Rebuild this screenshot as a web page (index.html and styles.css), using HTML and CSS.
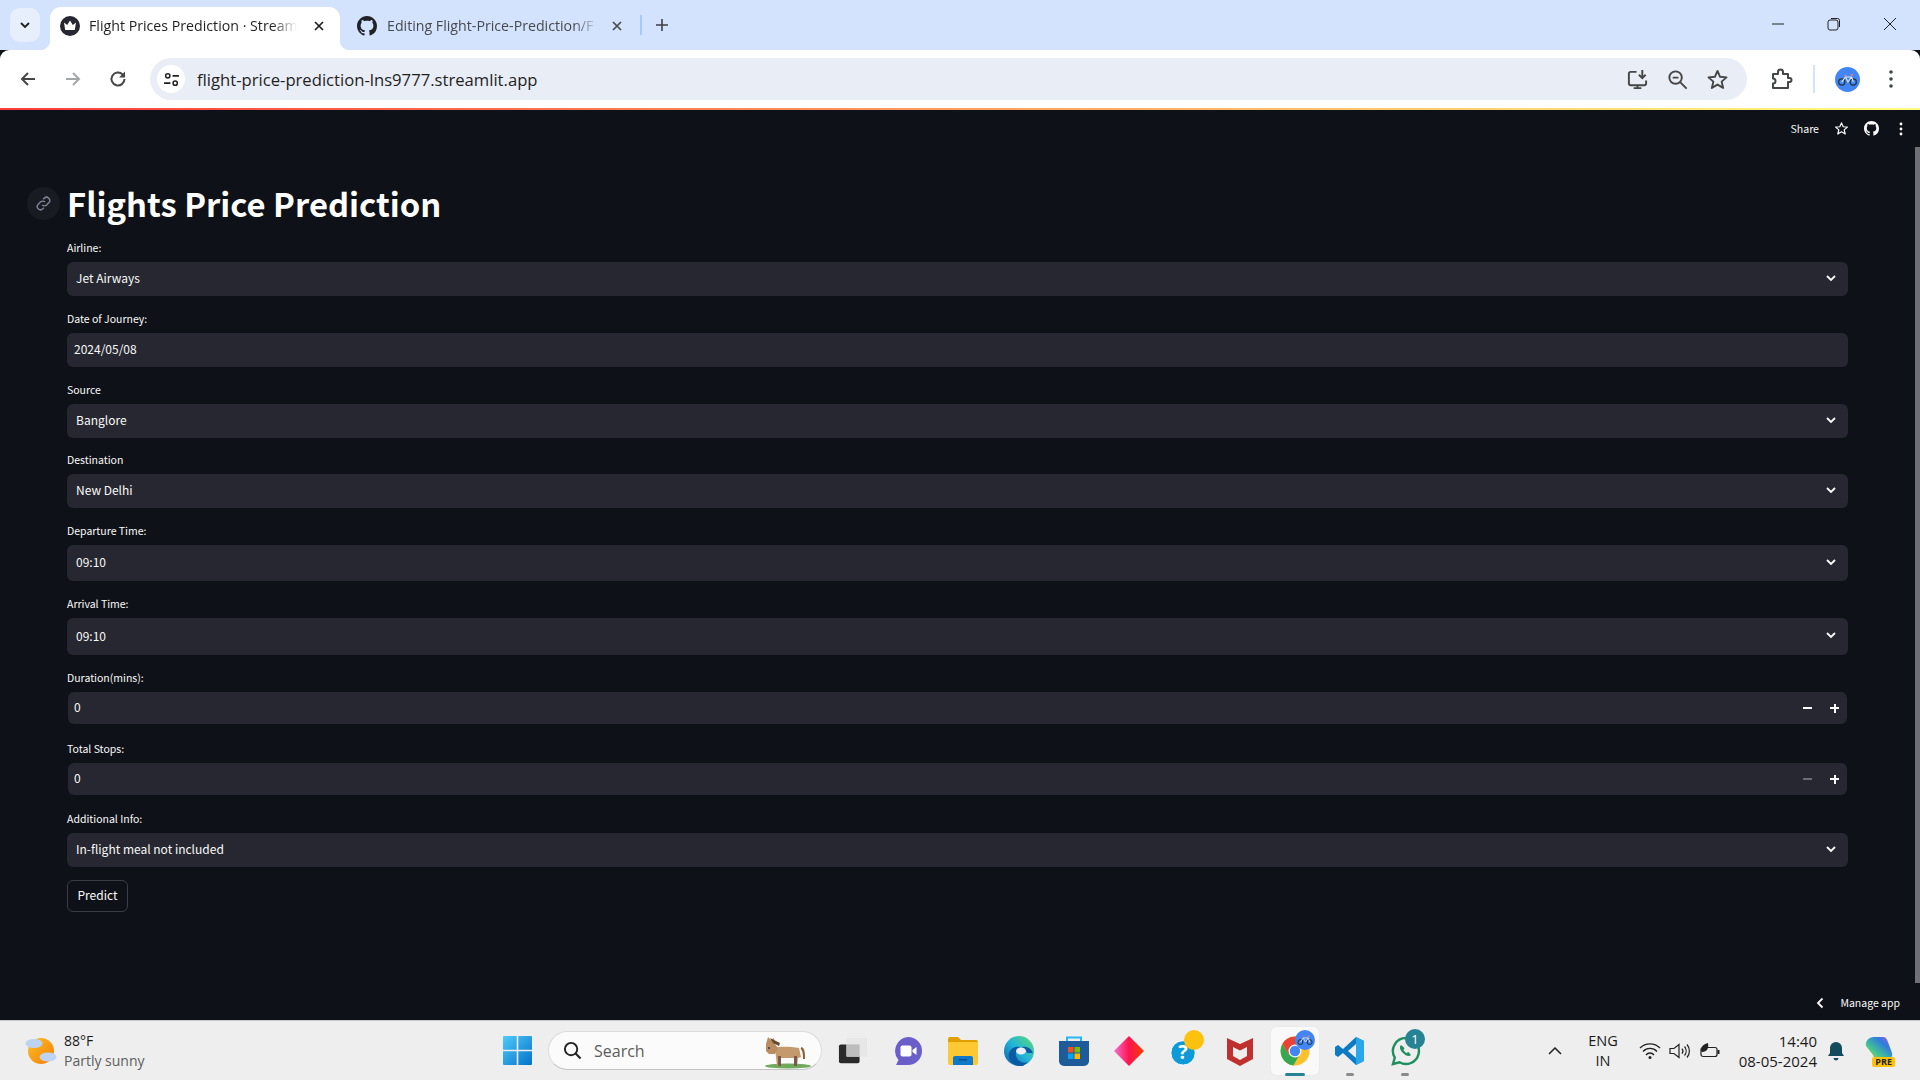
FILE: index.html
```html
<!DOCTYPE html>
<html lang="en">
<head>
    <meta charset="UTF-8">
    <title>Flight Prices Prediction · Streamlit</title>
    <link rel="stylesheet" href="styles.css">
</head>
<body>
    <svg class="defs" width="0" height="0">
        <symbol id="gh" viewBox="0 0 16 16"><path fill="currentColor" d="M8 0C3.58 0 0 3.58 0 8c0 3.54 2.29 6.53 5.47 7.59.4.07.55-.17.55-.38 0-.19-.01-.82-.01-1.49-2.01.37-2.53-.49-2.69-.94-.09-.23-.48-.94-.82-1.13-.28-.15-.68-.52-.01-.53.63-.01 1.08.58 1.23.82.72 1.21 1.87.87 2.33.66.07-.52.28-.87.51-1.07-1.78-.2-3.64-.89-3.64-3.95 0-.87.31-1.59.82-2.15-.08-.2-.36-1.02.08-2.12 0 0 .67-.21 2.2.82.64-.18 1.32-.27 2-.27.68 0 1.36.09 2 .27 1.53-1.04 2.2-.82 2.2-.82.44 1.1.16 1.92.08 2.12.51.56.82 1.27.82 2.15 0 3.07-1.87 3.75-3.65 3.95.29.25.54.73.54 1.48 0 1.07-.01 1.93-.01 2.2 0 .21.15.46.55.38A8.013 8.013 0 0016 8c0-4.42-3.58-8-8-8z"/></symbol>
        <symbol id="chev" viewBox="0 0 12 12"><path d="M2 4l4 4 4-4" fill="none" stroke="currentColor" stroke-width="1.8"/></symbol>
        <symbol id="close" viewBox="0 0 12 12"><path d="M2 2l8 8M10 2l-8 8" fill="none" stroke="currentColor" stroke-width="1.7"/></symbol>
        <symbol id="star" viewBox="0 0 24 24"><path d="M12 3l2.7 6.2 6.7.6-5.1 4.4 1.6 6.6L12 17.3l-5.9 3.5 1.6-6.6-5.1-4.4 6.7-.6z" fill="none" stroke="currentColor" stroke-width="2" stroke-linejoin="round"/></symbol>
        <symbol id="bike" viewBox="0 0 24 24"><circle cx="12" cy="12" r="12" fill="#4285f4"/><g fill="none"><circle cx="6.500" cy="14.500" r="3" stroke="#263238" stroke-width="1.200"/><circle cx="17.500" cy="14.500" r="3" stroke="#263238" stroke-width="1.200"/><path d="M6.500 14.500L10 9.500h6l1.500 5M10 9.500l2.500 5 3.500-5" stroke="#dce8ff" stroke-width="1"/><path d="M9 8.500h2.500M15 7.500h2.500" stroke="#f08a5d" stroke-width="1.200"/></g></symbol>
    </svg>

    <div class="tabbar">
        <div class="tab-switch"><svg class="ico-12"><use href="#chev"/></svg></div>
        <div class="tab tab-active">
            <svg class="tab-icon" viewBox="0 0 20 20"><circle cx="10" cy="10" r="10" fill="#262730"/><path d="M4 6.500l3.200 2.600L10 4.500l2.800 4.600L16 6.500 14.800 14H5.200z" fill="#fff"/></svg>
            <span class="tab-title">Flight Prices Prediction · Stream</span>
            <svg class="tab-close"><use href="#close"/></svg>
        </div>
        <div class="tab">
            <svg class="tab-icon tab-gh"><use href="#gh"/></svg>
            <span class="tab-title">Editing Flight-Price-Prediction/F</span>
            <svg class="tab-close"><use href="#close"/></svg>
        </div>
        <div class="tab-sep"></div>
        <svg class="tab-new" viewBox="0 0 14 14"><path d="M7 1v12M1 7h12" stroke="#3c4043" stroke-width="1.6"/></svg>
        <div class="win-controls">
            <svg viewBox="0 0 14 14"><path d="M1 7h12" stroke="#222" stroke-width="1"/></svg>
            <svg viewBox="0 0 14 14"><rect x="1" y="3" width="10" height="10" rx="2" fill="none" stroke="#222"/><path d="M4 1.500h6.500a2 2 0 012 2V10" fill="none" stroke="#222"/></svg>
            <svg viewBox="0 0 14 14"><path d="M1 1l12 12M13 1L1 13" stroke="#222" stroke-width="1"/></svg>
        </div>
    </div>

    <div class="toolbar">
        <svg class="nav-btn" viewBox="0 0 20 20"><path d="M17 10H4M10 4l-6 6 6 6" fill="none" stroke="#444746" stroke-width="2"/></svg>
        <svg class="nav-btn" viewBox="0 0 20 20"><path d="M3 10h13M10 4l6 6-6 6" fill="none" stroke="#a4a6a8" stroke-width="2"/></svg>
        <svg class="nav-btn" viewBox="0 0 20 20"><path d="M16.500 10a6.500 6.500 0 11-1.900-4.600L16.500 7.500" fill="none" stroke="#444746" stroke-width="2"/><path d="M17 2.500v6h-6z" fill="#444746"/></svg>
        <div class="omnibox">
            <div class="site-info">
                <svg viewBox="0 0 16 16"><circle cx="4.500" cy="4.500" r="2" fill="none" stroke="#1f1f1f" stroke-width="1.400"/><path d="M9 4.500h6M1 11.500h6" stroke="#1f1f1f" stroke-width="1.600"/><circle cx="11.500" cy="11.500" r="2" fill="none" stroke="#1f1f1f" stroke-width="1.400"/></svg>
            </div>
            <span class="url">flight-price-prediction-lns9777.streamlit.app</span>
            <div class="omni-actions">
                <svg viewBox="0 0 24 24"><path d="M11 4H5a2 2 0 00-2 2v10a2 2 0 002 2h14a2 2 0 002-2v-3M8 21h8M12 18v3" fill="none" stroke="#444746" stroke-width="2"/><path d="M17 2v8M13.500 7l3.500 3.500L20.500 7" fill="none" stroke="#444746" stroke-width="2"/></svg>
                <svg viewBox="0 0 24 24"><circle cx="10" cy="10" r="6.500" fill="none" stroke="#444746" stroke-width="2"/><path d="M7 10h6M15 15l6.500 6.500" stroke="#444746" stroke-width="2"/></svg>
                <svg class="omni-star"><use href="#star"/></svg>
            </div>
        </div>
        <svg class="puzzle" viewBox="0 0 24 24"><path d="M4 7h5V5a2.500 2.500 0 015 0v2h5v4h1.500a2 2 0 010 4H19v6H4v-4.500a2.500 2.500 0 000-5z" fill="none" stroke="#444746" stroke-width="2" stroke-linejoin="round"/></svg>
        <div class="tool-sep"></div>
        <svg class="avatar"><use href="#bike"/></svg>
        <svg class="menu-dots" viewBox="0 0 4 18"><circle cx="2" cy="2" r="1.800" fill="#444746"/><circle cx="2" cy="9" r="1.800" fill="#444746"/><circle cx="2" cy="16" r="1.800" fill="#444746"/></svg>
    </div>

    <div class="app">
        <div class="decoration"></div>
        <div class="scrollbar"></div>
        <div class="app-header">
            <span class="share">Share</span>
            <svg class="head-ico"><use href="#star"/></svg>
            <svg class="head-ico head-gh"><use href="#gh"/></svg>
            <svg class="head-dots" viewBox="0 0 4 14"><circle cx="2" cy="2" r="1.400" fill="#fafafa"/><circle cx="2" cy="7" r="1.400" fill="#fafafa"/><circle cx="2" cy="12" r="1.400" fill="#fafafa"/></svg>
        </div>
        <div class="content">
            <div class="title-row">
                <div class="anchor">
                    <svg viewBox="0 0 24 24"><path d="M10 14a4.500 4.500 0 006.400 0l3-3a4.500 4.500 0 00-6.400-6.400l-1.500 1.500M14 10a4.500 4.500 0 00-6.400 0l-3 3a4.500 4.500 0 006.400 6.400l1.500-1.500" fill="none" stroke="#808495" stroke-width="2"/></svg>
                </div>
                <h1>Flights Price Prediction</h1>
            </div>

            <div class="field">
                <label>Airline:</label>
                <div class="box select"><span>Jet Airways</span><svg class="chev"><use href="#chev"/></svg></div>
            </div>
            <div class="field">
                <label>Date of Journey:</label>
                <div class="box date"><span>2024/05/08</span></div>
            </div>
            <div class="field field-tight">
                <label>Source</label>
                <div class="box select"><span>Banglore</span><svg class="chev"><use href="#chev"/></svg></div>
            </div>
            <div class="field">
                <label>Destination</label>
                <div class="box select"><span>New Delhi</span><svg class="chev"><use href="#chev"/></svg></div>
            </div>
            <div class="field">
                <label>Departure Time:</label>
                <div class="box select box-36"><span>09:10</span><svg class="chev"><use href="#chev"/></svg></div>
            </div>
            <div class="field">
                <label>Arrival Time:</label>
                <div class="box select box-37"><span>09:10</span><svg class="chev"><use href="#chev"/></svg></div>
            </div>
            <div class="field field-wide">
                <label>Duration(mins):</label>
                <div class="box number">
                    <span>0</span>
                    <b class="step"><i class="minus"></i></b>
                    <b class="step"><i class="minus"></i><i class="plus-bar"></i></b>
                </div>
            </div>
            <div class="field field-mid">
                <label>Total Stops:</label>
                <div class="box number">
                    <span>0</span>
                    <b class="step step-off"><i class="minus"></i></b>
                    <b class="step"><i class="minus"></i><i class="plus-bar"></i></b>
                </div>
            </div>
            <div class="field field-last">
                <label>Additional Info:</label>
                <div class="box select"><span>In-flight meal not included</span><svg class="chev"><use href="#chev"/></svg></div>
            </div>
            <button class="predict">Predict</button>
        </div>
        <div class="manage">
            <svg viewBox="0 0 10 12"><path d="M7.500 1.500L3 6l4.500 4.500" fill="none" stroke="#fafafa" stroke-width="1.800"/></svg>
            <span>Manage app</span>
        </div>
    </div>

    <div class="taskbar">
        <div class="weather">
            <svg viewBox="0 0 32 30"><defs><linearGradient id="sun" x1="0" y1="0" x2="1" y2="1"><stop offset="0" stop-color="#fbc02d"/><stop offset="1" stop-color="#f57c00"/></linearGradient></defs><circle cx="16" cy="15" r="13" fill="url(#sun)"/><ellipse cx="9" cy="7.500" rx="8.500" ry="4.500" fill="#bcd3f2"/><ellipse cx="23" cy="21" rx="8.500" ry="4.500" fill="#bcd3f2"/></svg>
            <div class="weather-text">
                <div class="temp">88°F</div>
                <div class="sky">Partly sunny</div>
            </div>
        </div>
        <svg class="win-logo" viewBox="0 0 29 29"><defs><linearGradient id="wl" x1="0" y1="0" x2="1" y2="1"><stop offset="0" stop-color="#4fcbfb"/><stop offset="1" stop-color="#0571c9"/></linearGradient></defs><path fill="url(#wl)" d="M0 1a1 1 0 011-1h12.700v13.700H0zM15.300 0H28a1 1 0 011 1v12.700H15.300zM0 15.300h13.700V29H1a1 1 0 01-1-1zM15.300 15.300H29V28a1 1 0 01-1 1H15.300z"/></svg>
        <div class="search">
            <svg class="search-ico" viewBox="0 0 20 20"><circle cx="8.500" cy="8.500" r="6.500" fill="none" stroke="#222" stroke-width="2"/><path d="M13 13l5.500 5.500" stroke="#222" stroke-width="2.200"/></svg>
            <span>Search</span>
            <svg class="donkey" viewBox="0 0 50 34"><ellipse cx="27" cy="31" rx="23" ry="2.500" fill="#6ea95c"/><path d="M14 13c6-2 16-1 24 0l2 9-3 1-1 8h-2l-1-8H20l-1 8h-3l-1-9z" fill="#c49a6c"/><path d="M5 9l2-7 3 3 3-2 1 6 3 4-3 6-6 0-3-3z" fill="#b98d60"/><path d="M9 3l10 5-1 3-6-3z" fill="#6b4a32"/><path d="M40 13c3 1 3 6 3 11" fill="none" stroke="#8a6038" stroke-width="2"/><rect x="17" y="21" width="3" height="10" fill="#7a5a4a"/><rect x="33" y="21" width="3" height="10" fill="#7a5a4a"/><circle cx="8" cy="13" r="1" fill="#334"/></svg>
        </div>
        <div class="task-icons">
            <div class="slot">
                <svg viewBox="0 0 32 32"><rect x="1" y="9" width="22" height="20" rx="2" fill="#2a2a2a"/><rect x="9" y="2" width="22" height="20" rx="1" fill="#e6e6e6" opacity=".92"/><rect x="9" y="9" width="14" height="13" fill="#bdbdbd"/></svg>
            </div>
            <div class="slot">
                <svg viewBox="0 0 30 30"><path d="M15 1a14 14 0 110 28H3l2.500-5A14 14 0 0115 1z" fill="#6a5fc8"/><rect x="7.500" y="9.500" width="11" height="11" rx="2" fill="#fff"/><path d="M19.500 14l4-3v8l-4-3z" fill="#fff"/></svg>
            </div>
            <div class="slot">
                <svg viewBox="0 0 30 28"><path d="M0 2a2 2 0 012-2h8l3 3h15a2 2 0 012 2v3H0z" fill="#e0a100"/><path d="M0 5h30v21a2 2 0 01-2 2H2a2 2 0 01-2-2z" fill="#fdc832"/><path d="M5 21a2 2 0 012-2h16a2 2 0 012 2v7H5z" fill="#0f78c8"/><rect x="11" y="22" width="8" height="1.500" fill="#0a4f8c"/></svg>
            </div>
            <div class="slot">
                <svg viewBox="0 0 30 30"><defs><linearGradient id="ed" x1="1" y1="0" x2="0" y2="1"><stop offset="0" stop-color="#5fdc75"/><stop offset=".5" stop-color="#22b4d8"/><stop offset="1" stop-color="#0c59a4"/></linearGradient></defs><circle cx="15" cy="15" r="15" fill="url(#ed)"/><path d="M29 18c-1-6-7-8-11-7-5 1-7 5-6 9 1 5 7 8 12 6l-5 4C10 31 3 24 5 17c2-5 6-7 10-6 3 0 7 2 8 6h6z" fill="#0c59a4"/><ellipse cx="17" cy="15" rx="5" ry="3.500" fill="#eef"/></svg>
            </div>
            <div class="slot">
                <svg viewBox="0 0 30 30"><path d="M8 5V1.500h14V5" fill="none" stroke="#29b6f6" stroke-width="2"/><path d="M0 5h30v20a5 5 0 01-5 5H5a5 5 0 01-5-5z" fill="#1d5c99"/><rect x="9" y="11" width="5.500" height="5.500" fill="#f25022"/><rect x="15.500" y="11" width="5.500" height="5.500" fill="#7fba00"/><rect x="9" y="17.500" width="5.500" height="5.500" fill="#00a4ef"/><rect x="15.500" y="17.500" width="5.500" height="5.500" fill="#ffb900"/></svg>
            </div>
            <div class="slot">
                <svg viewBox="0 0 30 30"><defs><linearGradient id="dm" x1="0" y1="0" x2="1" y2="0"><stop offset="0" stop-color="#f56fd0"/><stop offset=".5" stop-color="#fb1550"/><stop offset="1" stop-color="#f63c00"/></linearGradient></defs><path d="M15 0l15 15-15 15L0 15z" fill="url(#dm)"/></svg>
            </div>
            <div class="slot">
                <svg class="help" viewBox="0 0 32 32"><circle cx="15" cy="18" r="13" fill="#0d9ad6" stroke="#fff" stroke-width="1"/><text x="15" y="25" class="help-mark">?</text></svg>
                <i class="help-dot"></i>
            </div>
            <div class="slot">
                <svg viewBox="0 0 28 30"><path d="M1 2l13 6 13-6v21l-13 7-13-7z" fill="#c0302e"/><path d="M7 11l7 3.500 7-3.500v9l-7 4-7-4z" fill="#eee"/></svg>
            </div>
            <div class="slot slot-active">
                <svg viewBox="0 0 30 30"><circle cx="15" cy="15" r="14.500" fill="#fbc02d"/><path d="M15 .5A14.500 14.500 0 002.400 8l6.300 10.500L15 9.500h12.500A14.500 14.500 0 0015 .5z" fill="#ea4335"/><path d="M2.400 8a14.500 14.500 0 0011 21.400l5.600-9.900L8.700 18.500z" fill="#34a853"/><circle cx="15" cy="15" r="6.500" fill="#fff"/><circle cx="15" cy="15" r="5.200" fill="#4285f4"/></svg>
                <svg class="chrome-avatar"><use href="#bike"/></svg>
                <i class="run-bar run-on"></i>
            </div>
            <div class="slot">
                <svg viewBox="0 0 30 30"><path d="M21 1l8 4v20l-8 4-13-12-5 4-3-2V11l3-2 5 4z" fill="#0e7ac4"/><path d="M21 1l8 4v20l-8 4z" fill="#28a8ea"/><path d="M21 8v14l-8-7z" fill="#eee"/></svg>
                <i class="run-bar"></i>
            </div>
            <div class="slot">
                <svg viewBox="0 0 30 30"><path d="M15 2a13 13 0 11-6.500 24.300L2 28l1.800-6.300A13 13 0 0115 2z" fill="none" stroke="#1f8f5f" stroke-width="2.400"/><path d="M10 9c-2 2-1 5 2 8s6 4 8 2l-2.500-3-2 1c-1-.5-2.500-2-3-3l1-2z" fill="#1f8f5f"/></svg>
                <i class="wa-badge">1</i>
                <i class="run-bar"></i>
            </div>
        </div>
        <div class="tray">
            <svg class="tray-chev" viewBox="0 0 14 8"><path d="M1 7l6-6 6 6" fill="none" stroke="#222" stroke-width="1.500"/></svg>
            <div class="lang">ENG<br>IN</div>
            <svg class="tray-ico" viewBox="0 0 22 18"><path d="M1 6a14 14 0 0120 0M4 9.500a9.500 9.500 0 0114 0M7 13a5 5 0 018 0" fill="none" stroke="#222" stroke-width="1.300"/><circle cx="11" cy="15.500" r="1.500" fill="#222"/></svg>
            <svg class="tray-ico" viewBox="0 0 22 18"><path d="M1 6.500h4L10 2.500v13l-5-4H1z" fill="none" stroke="#222" stroke-width="1.200"/><path d="M13 6.500a4 4 0 010 5M15.500 4.500a7 7 0 010 9M18 2.500a10 10 0 010 13" fill="none" stroke="#222" stroke-width="1.200"/></svg>
            <svg class="tray-ico" viewBox="0 0 22 18"><rect x="2" y="5.500" width="16" height="9" rx="2" fill="none" stroke="#222" stroke-width="1.200"/><rect x="18.500" y="8" width="2" height="4" fill="#222"/><path d="M2 9c0-5 3-7 7-8 1 5-1 9-6 9z" fill="#222"/></svg>
            <div class="clock">14:40<br>08-05-2024</div>
            <svg class="bell" viewBox="0 0 18 20"><path d="M9 1a6 6 0 00-6 6v5l-2 3h16l-2-3V7a6 6 0 00-6-6z" fill="#134a5c"/><path d="M6.500 17a2.500 2.500 0 005 0z" fill="#134a5c"/></svg>
            <div class="copilot">
                <svg viewBox="0 0 30 26"><defs><linearGradient id="cp" x1="0" y1="1" x2="1" y2="0"><stop offset="0" stop-color="#f6c343"/><stop offset=".35" stop-color="#43c58f"/><stop offset=".7" stop-color="#2f7be0"/><stop offset="1" stop-color="#c05fd8"/></linearGradient></defs><path d="M10 1h9c3 0 4 2 5 5l4 11c1 4-2 7-5 7h-9c-3 0-4-2-5-5L2 10C1 5 5 1 10 1z" fill="url(#cp)"/></svg>
                <b>PRE</b>
            </div>
        </div>
    </div>
</body>
</html>
```

FILE: styles.css
```css
* {
    box-sizing: border-box;
}
html, body {
    margin: 0;
    padding: 0;
}
body {
    width: 1920px;
    height: 1080px;
    overflow: hidden;
    display: flex;
    flex-direction: column;
    font-family: "Open Sans", "Noto Sans", sans-serif;
    background: #0e1117;
}
.defs {
    position: absolute;
}

/* browser tabs */
.tabbar {
    height: 50px;
    flex: none;
    background: #d3e3fd;
    display: flex;
    align-items: flex-end;
    padding-left: 10px;
}
.tab-switch {
    width: 30px;
    height: 34px;
    margin-bottom: 8px;
    margin-right: 10px;
    background: #e8effc;
    border-radius: 10px;
    display: flex;
    align-items: center;
    justify-content: center;
    color: #1f1f1f;
}
.ico-12 {
    width: 12px;
    height: 12px;
}
.tab {
    flex: none;
    width: 290px;
    height: 43px;
    display: flex;
    align-items: center;
    padding: 0 14px 6px 10px;
    color: #474a4d;
}
.tab-active {
    position: relative;
    background: #fff;
    border-radius: 11px 11px 0 0;
    color: #1f1f1f;
}
.tab-active::before, .tab-active::after {
    content: "";
    position: absolute;
    bottom: 0;
    width: 10px;
    height: 10px;
}
.tab-active::before {
    left: -10px;
    background: radial-gradient(circle at 0 0, transparent 10px, #fff 10.500px);
}
.tab-active::after {
    right: -10px;
    background: radial-gradient(circle at 100% 0, transparent 10px, #fff 10.500px);
}
.tab-icon {
    width: 20px;
    height: 20px;
    flex: none;
    margin-right: 9px;
}
.tab-gh {
    color: #1f2328;
    margin-right: 10px;
}
.tab-title {
    width: 208px;
    flex: none;
    font-size: 14.200px;
    white-space: nowrap;
    overflow: hidden;
    -webkit-mask-image: linear-gradient(90deg, #000 88%, transparent);
    mask-image: linear-gradient(90deg, #000 88%, transparent);
}
.tab-close {
    width: 12px;
    height: 12px;
    margin-left: 16px;
    flex: none;
}
.tab-active + .tab {
    width: 300px;
    padding-left: 17px;
}
.tab-active + .tab .tab-title {
    width: 212px;
}
.tab-active + .tab .tab-close {
    margin-left: 12px;
}
.tab-sep {
    width: 2px;
    height: 20px;
    background: #a8c7fa;
    margin: 0 0 15px 0;
}
.tab-new {
    width: 14px;
    height: 14px;
    margin: 0 0 18px 13px;
}
.win-controls {
    margin-left: auto;
    align-self: flex-start;
    display: flex;
    gap: 42px;
    padding: 17px 23px 0 0;
}
.win-controls svg {
    width: 14px;
    height: 14px;
}

/* browser toolbar */
.toolbar {
    height: 58px;
    flex: none;
    background: #fff;
    border-radius: 9px 9px 0 0;
    display: flex;
    align-items: center;
    padding-left: 18px;
}
.nav-btn {
    width: 20px;
    height: 20px;
    margin-right: 25px;
    flex: none;
}
.omnibox {
    width: 1597px;
    height: 42px;
    margin-left: -3px;
    background: #e9edf6;
    border-radius: 21px;
    display: flex;
    align-items: center;
    padding-left: 7px;
}
.site-info {
    width: 28px;
    height: 28px;
    border-radius: 50%;
    background: #fff;
    display: flex;
    align-items: center;
    justify-content: center;
    margin-right: 12px;
}
.site-info svg {
    width: 17px;
    height: 17px;
}
.url {
    font-size: 16.650px;
    color: #1f1f1f;
}
.omni-actions {
    margin-left: auto;
    display: flex;
    gap: 17px;
    padding-right: 18px;
    align-items: center;
}
.omni-actions svg {
    width: 23px;
    height: 23px;
}
.omni-star {
    color: #444746;
}
.puzzle {
    width: 24px;
    height: 24px;
    margin-left: 22px;
}
.tool-sep {
    width: 2px;
    height: 28px;
    background: #d3e3fd;
    margin-left: 20px;
}
.avatar {
    width: 25px;
    height: 25px;
    margin-left: 20px;
}
.menu-dots {
    width: 4px;
    height: 18px;
    margin-left: 29px;
}

/* streamlit app */
.app {
    flex: 1;
    position: relative;
    background: #0e1117;
    color: #fafafa;
    font-family: "Noto Sans CJK SC", "Noto Sans", sans-serif;
    display: flex;
    flex-direction: column;
}
.decoration {
    height: 2px;
    flex: none;
    background: linear-gradient(90deg, #ff3c3c, #fffd80);
}
.scrollbar {
    position: absolute;
    right: 0;
    top: 39px;
    width: 5px;
    height: 836px;
    background: #6f7075;
}
.app-header {
    height: 37px;
    flex: none;
    display: flex;
    align-items: center;
    justify-content: flex-end;
    padding-right: 17px;
}
.share {
    font-size: 10.600px;
    margin-right: 15px;
}
.head-ico {
    width: 15px;
    height: 15px;
    margin-right: 15px;
    color: #fafafa;
}
.head-gh {
    margin-right: 20px;
}
.head-dots {
    width: 4px;
    height: 14px;
}
.content {
    padding: 0 72px 0 67px;
}
.title-row {
    position: relative;
    height: 94px;
    padding-top: 33px;
}
.anchor {
    position: absolute;
    left: -40px;
    top: 40px;
    width: 33px;
    height: 33px;
    border-radius: 50%;
    background: #181b22;
    display: flex;
    align-items: center;
    justify-content: center;
}
.anchor svg {
    width: 17px;
    height: 17px;
}
h1 {
    margin: 0;
    font-size: 32.800px;
    line-height: 46px;
    font-weight: 700;
    color: #fff;
}
.field {
    margin-bottom: 16px;
}
.field-tight {
    margin-bottom: 15px;
}
.field-wide {
    margin-bottom: 18px;
}
.field-mid {
    margin-bottom: 17px;
}
.field-last {
    margin-bottom: 13px;
}
label {
    display: block;
    height: 21px;
    line-height: 14px;
    font-size: 10.500px;
    color: #fafafa;
}
.box {
    height: 34px;
    background: #262730;
    border-radius: 6px;
    display: flex;
    align-items: center;
    padding-bottom: 3px;
    font-size: 12px;
    color: #fafafa;
}
.box-36 {
    height: 36px;
}
.box-37 {
    height: 37px;
}
.select {
    padding-left: 9px;
    padding-right: 11px;
    justify-content: space-between;
}
.date {
    padding-left: 7px;
}
.chev {
    width: 12px;
    height: 12px;
    color: #fafafa;
}
.number {
    height: 32px;
    margin: 0 1px;
    padding-left: 6px;
    padding-right: 8px;
}
.number span {
    margin-right: auto;
}
.step {
    position: relative;
    width: 9px;
    height: 9px;
    margin-top: 3px;
    margin-left: 18px;
    color: #fafafa;
    display: block;
}
.step-off {
    color: #6c6e76;
}
.minus, .plus-bar {
    position: absolute;
    background: currentColor;
}
.minus {
    left: 0;
    top: 3.500px;
    width: 100%;
    height: 2px;
}
.plus-bar {
    top: 0;
    left: 3.500px;
    width: 2px;
    height: 100%;
}
.predict {
    display: block;
    width: 61px;
    height: 32px;
    background: #0e1117;
    border: 1px solid #3c3e47;
    border-radius: 6px;
    color: #fafafa;
    font-family: inherit;
    font-size: 12px;
    padding: 0 0 3px;
}
.manage {
    position: absolute;
    right: 20px;
    bottom: 10px;
    display: flex;
    align-items: center;
    font-size: 10.500px;
}
.manage svg {
    width: 10px;
    height: 12px;
    margin-right: 15px;
}

/* windows taskbar */
.taskbar {
    height: 60px;
    flex: none;
    background: #eeeeee;
    border-top: 1px solid #c9cacb;
    display: flex;
    align-items: center;
    color: #1b1b1b;
}
.weather {
    width: 503px;
    display: flex;
    align-items: center;
    padding-left: 25px;
}
.weather > svg {
    width: 32px;
    height: 30px;
    margin-right: 7px;
}
.weather-text {
    margin-top: -1px;
}
.temp {
    font-size: 14px;
    line-height: 20px;
}
.sky {
    font-size: 14px;
    line-height: 19px;
    color: #5d5d5d;
}
.win-logo {
    width: 29px;
    height: 29px;
}
.search {
    width: 274px;
    height: 39px;
    margin-left: 16px;
    background: #fbfbfb;
    border: 1px solid #dcdcdc;
    border-bottom-color: #c3c3c3;
    border-radius: 20px;
    display: flex;
    align-items: center;
    padding-left: 14px;
    font-size: 16px;
    color: #5b5b5b;
}
.search-ico {
    width: 19px;
    height: 19px;
    margin-right: 12px;
}
.donkey {
    width: 50px;
    height: 34px;
    margin-left: auto;
    margin-right: 10px;
    margin-top: 2px;
}
.task-icons {
    display: flex;
    margin-left: 3px;
}
.slot {
    position: relative;
    width: 55.300px;
    height: 48px;
    display: flex;
    align-items: center;
    justify-content: center;
}
.slot > svg:first-child {
    width: 30px;
    height: 30px;
}
.slot-active::before {
    content: "";
    position: absolute;
    left: 4px;
    top: 0;
    width: 48px;
    height: 48px;
    background: #f9f9f9;
    border-radius: 5px;
    box-shadow: 0 0 1px #d0d0d0;
}
.slot-active > svg {
    position: relative;
}
.help-mark {
    fill: #fff;
    font-size: 21px;
    font-weight: 700;
    text-anchor: middle;
}
.help-dot {
    position: absolute;
    left: 27px;
    top: 3px;
    width: 20px;
    height: 20px;
    border-radius: 50%;
    background: #fec10d;
}
.slot-active .chrome-avatar {
    position: absolute;
    left: 28px;
    top: 3px;
    width: 20px;
    height: 20px;
}
.run-bar {
    position: absolute;
    left: 23px;
    bottom: -1px;
    width: 8px;
    height: 3px;
    border-radius: 2px;
    background: #8a8a8a;
}
.run-bar.run-on {
    left: 18px;
    width: 20px;
    background: #268394;
}
.wa-badge {
    position: absolute;
    left: 27px;
    top: 2px;
    width: 20px;
    height: 20px;
    border-radius: 50%;
    background: #268394;
    color: #fff;
    font-style: normal;
    font-size: 13px;
    line-height: 20px;
    text-align: center;
}
.tray {
    margin-left: auto;
    padding-right: 26px;
    display: flex;
    align-items: center;
}
.tray-chev {
    width: 14px;
    height: 8px;
    margin-right: 13px;
}
.lang {
    width: 56px;
    font-size: 14.500px;
    line-height: 20px;
    text-align: center;
}
.tray-ico {
    width: 22px;
    height: 18px;
    margin-left: 8px;
}
.lang + .tray-ico {
    margin-left: 8px;
}
.clock {
    width: 96px;
    font-size: 15px;
    line-height: 20px;
    text-align: right;
}
.bell {
    width: 18px;
    height: 20px;
    margin-left: 10px;
}
.copilot {
    position: relative;
    width: 30px;
    height: 30px;
    margin-left: 19px;
}
.copilot svg {
    width: 30px;
    height: 26px;
}
.copilot b {
    position: absolute;
    right: -1px;
    bottom: -1px;
    padding: 0 3px;
    background: #fec10d;
    border-radius: 2px;
    font-size: 9px;
    line-height: 10px;
    color: #222;
}
```
